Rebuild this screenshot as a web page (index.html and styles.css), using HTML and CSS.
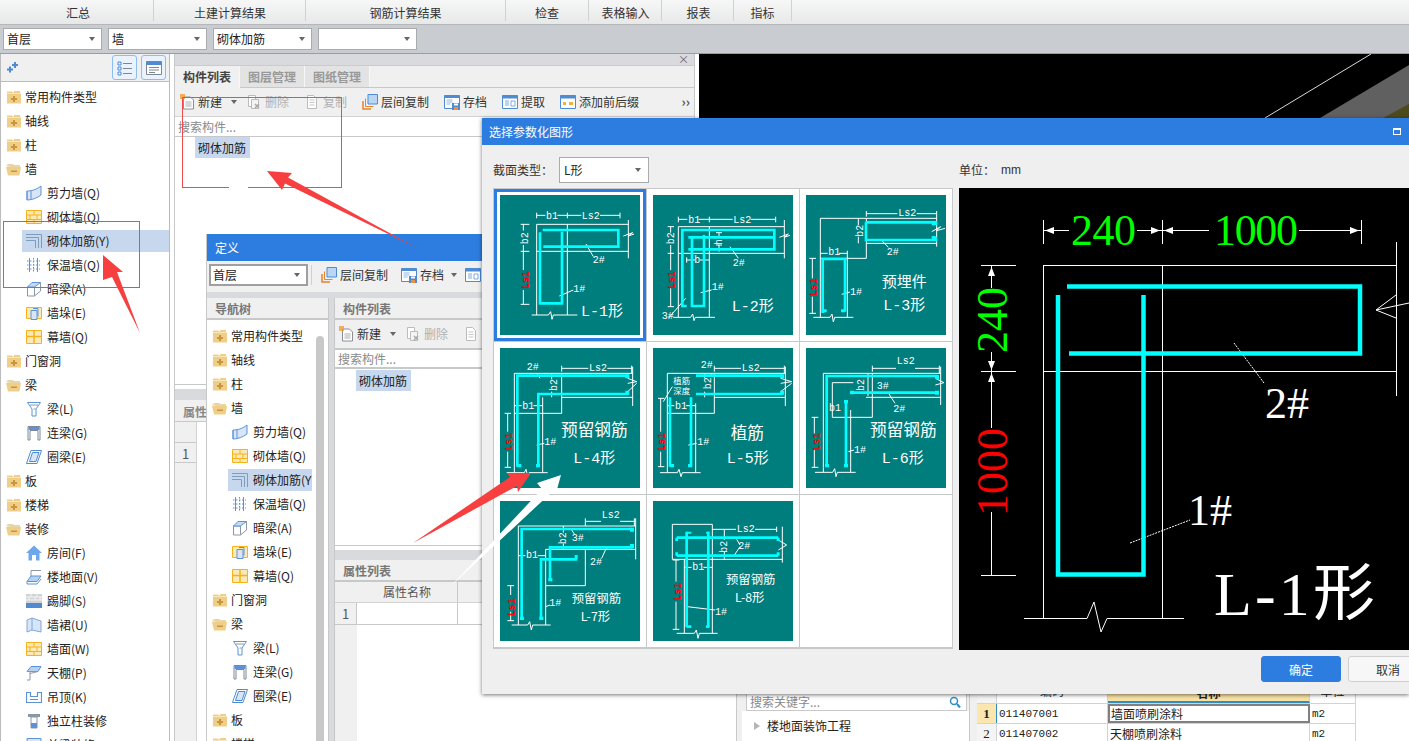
FILE: index.html
```html
<!DOCTYPE html>
<html lang="zh">
<head>
<meta charset="utf-8">
<title>选择参数化图形</title>
<link rel="stylesheet" href="styles.css">
</head>
<body>
<svg class="sprite" xmlns="http://www.w3.org/2000/svg">
  <symbol id="fp" viewBox="0 0 16 16"><path d="M1 2.500h5l1 1h1V2h6v2h1v10.500H1z" fill="#efcf87"/><path d="M1 4.500h14" stroke="#f8e6bb"/><path d="M7 7h2v2h2v2H9v2H7v-2H5V9h2z" fill="#c9963f"/></symbol>
  <symbol id="fm" viewBox="0 0 16 16"><path d="M2 3h5l1 1h6v2H4L0 5z" fill="#e9d6a8"/><path d="M0 6h15l-1.500 8.500H2z" fill="#efcf87"/><path d="M5 9.500h6v1.500H5z" fill="#c9963f"/></symbol>
  <symbol id="shear" viewBox="0 0 16 16"><path d="M1 6c4 0 9-1 14-5v9c-4 3-9 5-14 5z" fill="#d7e5f6" stroke="#5d93d6"/><path d="M1 6v9M5 5.500v9" stroke="#5d93d6" fill="none"/></symbol>
  <symbol id="brick" viewBox="0 0 16 16"><path d="M.5 1.500h15v13H.5z" fill="#fde9b5" stroke="#f6b21b"/><path d="M.5 6h15M.5 10.500h15M8 1.500V6M4 6v4.500M11 6v4.500M8 10.500v4" stroke="#f6b21b" fill="none"/></symbol>
  <symbol id="rebar" viewBox="0 0 16 16"><path d="M0 1.500h15.500V15M0 4.500h12.500V15M0 7.500h9.500V15" fill="none" stroke="#7c9cc0"/><path d="M0 3h14V15" fill="none" stroke="#c8d6e6"/></symbol>
  <symbol id="insul" viewBox="0 0 16 16"><path d="M3.500 1v14M11.500 1v14" stroke="#5d93d6" fill="none"/><path d="M7.500 1v14M1 4h13M1 8h13M1 12h13" stroke="#5d93d6" stroke-dasharray="1.500 1.500" fill="none"/></symbol>
  <symbol id="hidden" viewBox="0 0 16 16"><path d="M1.500 6v9h7V6z" fill="#fff" stroke="#8b97a5"/><path d="M1.500 6L6 1.500h8.500L8.500 6z" fill="#c6dbf3" stroke="#5d93d6"/><path d="M8.500 15l6-5V1.500" fill="#fff" stroke="#8b97a5"/></symbol>
  <symbol id="pier" viewBox="0 0 16 16"><path d="M.5 2.500h15v11H.5z" fill="#fde9b5" stroke="#f6b21b"/><path d="M5 5.500h6v9H5z" fill="#d7e5f6" stroke="#5d93d6"/><path d="M7 3.500h5v8" fill="none" stroke="#5d93d6"/></symbol>
  <symbol id="curtain" viewBox="0 0 16 16"><path d="M.5 1.500h15v13H.5z" fill="#fde9b5" stroke="#f6b21b"/><path d="M.5 7.500h15M8 1.500v13" stroke="#f6b21b" stroke-width="1.500"/></symbol>
  <symbol id="beam" viewBox="0 0 16 16"><path d="M1.500 1.500h13L10 8v7H6V8z" fill="#fff" stroke="#5d93d6"/><path d="M4 4h8M7.500 8h2" stroke="#8b97a5"/></symbol>
  <symbol id="link" viewBox="0 0 16 16"><path d="M2 1.500h12V15h-2V5.500H4V15H2z" fill="#fff" stroke="#7e8894"/><path d="M2.500 2h11v3h-11z" fill="#5d93d6"/></symbol>
  <symbol id="ring" viewBox="0 0 16 16"><path d="M5 1.500h10.500L11 14.500H.5z" fill="#fff" stroke="#4f8bd3"/><path d="M6.500 3.500h6.500l-3 9H3.500z" fill="#d7e5f6" stroke="#4f8bd3"/></symbol>
  <symbol id="room" viewBox="0 0 16 16"><path d="M8 .5L16 8h-2.500v7.500H10V10H6v5.500H2.500V8H0z" fill="#6ea8ea"/></symbol>
  <symbol id="floor" viewBox="0 0 16 16"><path d="M5 7V1.500h10" fill="none" stroke="#8b97a5"/><path d="M5 7h10l-4 5.500H1z" fill="#b6d2f2" stroke="#5d93d6"/><path d="M1 12.500v2.500h10l4-5" fill="none" stroke="#5d93d6"/></symbol>
  <symbol id="skirt" viewBox="0 0 16 16"><path d="M0 1h16v9H0z" fill="#d2d3d5"/><path d="M0 4h16M0 7h16M5 1v3M11 1v3M3 4v3M9 4v3M14 4v3" stroke="#f4f4f4"/><path d="M0 10h16v5H0z" fill="#4f8bd3"/></symbol>
  <symbol id="dado" viewBox="0 0 16 16"><path d="M1 3l5 -2 9 3v11l-9-2-5 2z" fill="#d7e5f6" stroke="#7da9e0"/><path d="M6 1v12" stroke="#7da9e0"/></symbol>
  <symbol id="ceiling" viewBox="0 0 16 16"><path d="M5 1.500h10l-3 5H1z" fill="#b6d2f2" stroke="#5d93d6"/><path d="M1 6.500h11M4 6.500V15L1 15M12 6.500l-8 2" fill="none" stroke="#8b97a5"/></symbol>
  <symbol id="susp" viewBox="0 0 16 16"><path d="M.5 3.500h4v4h7v-4h4v10H.5z" fill="#fff" stroke="#5d93d6" stroke-width="1.200"/><path d="M4 10.500h8" stroke="#5d93d6"/></symbol>
  <symbol id="colfin" viewBox="0 0 16 16"><path d="M2 1h12v3H2z" fill="#8b97a5"/><path d="M5 4h6v11H5z" fill="#fff" stroke="#8b97a5"/><path d="M5 10h6v5H5z" fill="#5d93d6"/></symbol>
  <symbol id="beamfin" viewBox="0 0 16 16"><path d="M1 1.500h14v5H1z" fill="#d7e5f6" stroke="#5d93d6"/><path d="M4 6.500v8h8v-8" fill="#fff" stroke="#8b97a5"/></symbol>
  <symbol id="new" viewBox="0 0 16 16"><path d="M3.500 3h7l3 3v9h-10z" fill="#fff" stroke="#8b8f95"/><path d="M5.500 8h6M5.500 10h6M5.500 12h6" stroke="#a9adb2"/><path d="M0 0h5v5H0z" fill="#f29a2e" opacity=".75"/></symbol>
  <symbol id="del" viewBox="0 0 16 16"><path d="M2.500 1.500h7v11h-7z" fill="#fff" stroke="#bcbcbc"/><path d="M5.500 5.500h7v9h-7z" fill="#f4f4f4" stroke="#bcbcbc"/><path d="M9 10l4 4M13 10l-4 4" stroke="#a9a9a9" stroke-width="1.500"/></symbol>
  <symbol id="copy" viewBox="0 0 16 16"><path d="M3.500 1.500h6l3 3v10h-9z" fill="#fff" stroke="#bcbcbc"/><path d="M5.500 6h5M5.500 8.500h5M5.500 11h5" stroke="#c6c6c6"/></symbol>
  <symbol id="floorcopy" viewBox="0 0 16 16"><path d="M1 7v8h8" fill="none" stroke="#e8832c" stroke-width="1.500"/><path d="M3.500 4.500v8h8" fill="none" stroke="#e8832c"/><path d="M6 .5h9.500V10H6z" fill="#b9d6f5" stroke="#4f8bd3"/></symbol>
  <symbol id="save" viewBox="0 0 16 16"><path d="M.5 1.500h15v13H.5z" fill="#fff" stroke="#4f8bd3"/><path d="M.5 1.500h15v2.500H.5z" fill="#4f8bd3"/><path d="M2.500 6h6M2.500 8h6M2.500 10h4" stroke="#8fb6e6"/><path d="M8 9h8v7H8z" fill="#4f8bd3"/><path d="M10 9.500h4v2h-4z" fill="#fff"/><path d="M10 13h4v3h-4z" fill="#f0913a"/></symbol>
  <symbol id="extract" viewBox="0 0 16 16"><path d="M.5 1.500h15v13H.5z" fill="#fff" stroke="#4f8bd3"/><path d="M.5 1.500h15v3H.5z" fill="#4f8bd3"/><path d="M3 7h4M3 9h4M3 11h4M9 7h4v5H9z" fill="none" stroke="#7da9e0"/></symbol>
  <symbol id="prefix" viewBox="0 0 16 16"><path d="M.5 1.500h15v13H.5z" fill="#fff" stroke="#4f8bd3"/><path d="M.5 1.500h15v3H.5z" fill="#4f8bd3"/><path d="M3 8h3v3H3zM9 8h4v3H9z" fill="#f0b040"/></symbol>
  <symbol id="tree-list" viewBox="0 0 16 16"><path d="M1 2h3v3H1zM1 7h3v3H1zM1 12h3v3H1z" fill="none" stroke="#4f8bd3"/><path d="M6 3.500h9M6 8.500h9M6 13.500h9" stroke="#7c8793"/></symbol>
  <symbol id="grid-list" viewBox="0 0 16 16"><path d="M.5 1.500h15v13H.5z" fill="#fff" stroke="#7c8793"/><path d="M.5 1.500h15v3.500H.5z" fill="#4f8bd3"/><path d="M3 7.500h10M3 10h10M3 12.500h6" stroke="#7c8793"/></symbol>
  <symbol id="spark" viewBox="0 0 12 12"><path d="M7 0h2v2h2v2H9v2H7V4H5V2h2zM2 4.500h2v2h2v2H4v2H2v-2H0v-2h2z" fill="#4f8bd3"/></symbol>
  <symbol id="lens" viewBox="0 0 12 12"><circle cx="5" cy="5" r="3.500" fill="none" stroke="#2f8fc5" stroke-width="1.500"/><path d="M8 8l3 3.500" stroke="#2f8fc5" stroke-width="2"/></symbol>
</svg>

<div class="app">
  <nav class="menubar">
    <div class="menu m1">汇总</div>
    <div class="menu m2">土建计算结果</div>
    <div class="menu m3">钢筋计算结果</div>
    <div class="menu m4">检查</div>
    <div class="menu m5">表格输入</div>
    <div class="menu m6">报表</div>
    <div class="menu m7">指标</div>
  </nav>

  <div class="filterbar">
    <div class="sel w99"><span>首层</span><i class="caret"></i></div>
    <div class="sel w99"><span>墙</span><i class="caret"></i></div>
    <div class="sel w99"><span>砌体加筋</span><i class="caret"></i></div>
    <div class="sel w99"><span></span><i class="caret"></i></div>
  </div>

  <div class="workspace">
    <aside class="nav">
      <div class="nav-head">
        <svg class="spark"><use href="#spark"/></svg>
        <div class="nav-btns">
          <div class="navbtn"><svg class="ico"><use href="#tree-list"/></svg></div>
          <div class="navbtn"><svg class="ico"><use href="#grid-list"/></svg></div>
        </div>
      </div>
      <div class="tree">
        <div class="row l0"><svg class="ico"><use href="#fp"/></svg><span>常用构件类型</span></div>
        <div class="row l0"><svg class="ico"><use href="#fp"/></svg><span>轴线</span></div>
        <div class="row l0"><svg class="ico"><use href="#fp"/></svg><span>柱</span></div>
        <div class="row l0"><svg class="ico"><use href="#fm"/></svg><span>墙</span></div>
        <div class="row l1"><svg class="ico"><use href="#shear"/></svg><span>剪力墙(Q)</span></div>
        <div class="row l1"><svg class="ico"><use href="#brick"/></svg><span>砌体墙(Q)</span></div>
        <div class="row l1 on"><svg class="ico"><use href="#rebar"/></svg><span>砌体加筋(Y)</span></div>
        <div class="row l1"><svg class="ico"><use href="#insul"/></svg><span>保温墙(Q)</span></div>
        <div class="row l1"><svg class="ico"><use href="#hidden"/></svg><span>暗梁(A)</span></div>
        <div class="row l1"><svg class="ico"><use href="#pier"/></svg><span>墙垛(E)</span></div>
        <div class="row l1"><svg class="ico"><use href="#curtain"/></svg><span>幕墙(Q)</span></div>
        <div class="row l0"><svg class="ico"><use href="#fp"/></svg><span>门窗洞</span></div>
        <div class="row l0"><svg class="ico"><use href="#fm"/></svg><span>梁</span></div>
        <div class="row l1"><svg class="ico"><use href="#beam"/></svg><span>梁(L)</span></div>
        <div class="row l1"><svg class="ico"><use href="#link"/></svg><span>连梁(G)</span></div>
        <div class="row l1"><svg class="ico"><use href="#ring"/></svg><span>圈梁(E)</span></div>
        <div class="row l0"><svg class="ico"><use href="#fp"/></svg><span>板</span></div>
        <div class="row l0"><svg class="ico"><use href="#fp"/></svg><span>楼梯</span></div>
        <div class="row l0"><svg class="ico"><use href="#fm"/></svg><span>装修</span></div>
        <div class="row l1"><svg class="ico"><use href="#room"/></svg><span>房间(F)</span></div>
        <div class="row l1"><svg class="ico"><use href="#floor"/></svg><span>楼地面(V)</span></div>
        <div class="row l1"><svg class="ico"><use href="#skirt"/></svg><span>踢脚(S)</span></div>
        <div class="row l1"><svg class="ico"><use href="#dado"/></svg><span>墙裙(U)</span></div>
        <div class="row l1"><svg class="ico"><use href="#brick"/></svg><span>墙面(W)</span></div>
        <div class="row l1"><svg class="ico"><use href="#ceiling"/></svg><span>天棚(P)</span></div>
        <div class="row l1"><svg class="ico"><use href="#susp"/></svg><span>吊顶(K)</span></div>
        <div class="row l1"><svg class="ico"><use href="#colfin"/></svg><span>独立柱装修</span></div>
        <div class="row l1"><svg class="ico"><use href="#beamfin"/></svg><span>单梁装修</span></div>
      </div>
    </aside>

    <section class="center">
      <div class="band"><span class="close">×</span></div>
      <div class="tabs">
        <div class="tab active">构件列表</div>
        <div class="tab">图层管理</div>
        <div class="tab">图纸管理</div>
      </div>
      <div class="tools">
        <div class="tool tool-new"><svg class="ico"><use href="#new"/></svg><span>新建</span><i class="caret caret-new"></i></div>
        <div class="tool off"><svg class="ico"><use href="#del"/></svg><span>删除</span></div>
        <div class="tool off"><svg class="ico"><use href="#copy"/></svg><span>复制</span></div>
        <div class="tool"><svg class="ico"><use href="#floorcopy"/></svg><span>层间复制</span></div>
        <div class="tool"><svg class="ico"><use href="#save"/></svg><span>存档</span></div>
        <div class="tool"><svg class="ico"><use href="#extract"/></svg><span>提取</span></div>
        <div class="tool"><svg class="ico"><use href="#prefix"/></svg><span>添加前后缀</span></div>
        <span class="more">››</span>
      </div>
      <div class="search">搜索构件...</div>
      <div class="list"><span class="chip">砌体加筋</span></div>
      <div class="band band-prop"></div>
      <div class="prop-head">属性列表</div>
      <div class="prop-body">
        <div class="gutter"><div class="gutter-top"></div><div class="gutter-num">1</div></div>
        <div class="prop-cols"></div>
      </div>
    </section>

    <main class="canvas">
      <svg class="scene" viewBox="0 0 710 64" width="710" height="64">
        <path d="M710 11L621 64H710z" fill="#606060"/>
        <path d="M710 50L684 64H710z" fill="#4d4a1c"/>
        <path d="M672 0L566 64" stroke="#d8d8d8" fill="none"/>
      </svg>
    </main>
  </div>

  <!-- lower library window, behind the dialog -->
  <section class="win win-lib">
    <div class="lib-tree">
      <div class="lib-search"><span>搜索关键字...</span><svg class="lens"><use href="#lens"/></svg></div>
      <div class="lib-item"><i class="tri"></i><span>楼地面装饰工程</span></div>
    </div>
    <div class="lib-split"></div>
    <div class="lib-table">
      <div class="lib-row head"><div class="c0"></div><div class="c1">编码</div><div class="c2 hl">名称</div><div class="c3">单位</div></div>
      <div class="lib-row"><div class="c0 hl-num">1</div><div class="c1">011407001</div><div class="c2 edit">墙面喷刷涂料</div><div class="c3">m2</div></div>
      <div class="lib-row"><div class="c0">2</div><div class="c1">011407002</div><div class="c2">天棚喷刷涂料</div><div class="c3">m2</div></div>
    </div>
  </section>

  <!-- 定义 window -->
  <section class="win win-def">
    <header class="titlebar">定义</header>
    <div class="def-tools">
      <div class="sel def-sel"><span>首层</span><i class="caret"></i></div>
      <div class="vsep"></div>
      <div class="tool"><svg class="ico"><use href="#floorcopy"/></svg><span>层间复制</span></div>
      <div class="tool"><svg class="ico"><use href="#save"/></svg><span>存档</span><i class="caret caret-save"></i></div>
      <div class="tool"><svg class="ico"><use href="#extract"/></svg></div>
    </div>
    <div class="def-main">
      <div class="def-left">
        <div class="pane-head">导航树</div>
        <div class="def-leftbody">
          <div class="tree def-tree">
            <div class="row l0"><svg class="ico"><use href="#fp"/></svg><span>常用构件类型</span></div>
            <div class="row l0"><svg class="ico"><use href="#fp"/></svg><span>轴线</span></div>
            <div class="row l0"><svg class="ico"><use href="#fp"/></svg><span>柱</span></div>
            <div class="row l0"><svg class="ico"><use href="#fm"/></svg><span>墙</span></div>
            <div class="row l1"><svg class="ico"><use href="#shear"/></svg><span>剪力墙(Q)</span></div>
            <div class="row l1"><svg class="ico"><use href="#brick"/></svg><span>砌体墙(Q)</span></div>
            <div class="row l1 on"><svg class="ico"><use href="#rebar"/></svg><span>砌体加筋(Y)</span></div>
            <div class="row l1"><svg class="ico"><use href="#insul"/></svg><span>保温墙(Q)</span></div>
            <div class="row l1"><svg class="ico"><use href="#hidden"/></svg><span>暗梁(A)</span></div>
            <div class="row l1"><svg class="ico"><use href="#pier"/></svg><span>墙垛(E)</span></div>
            <div class="row l1"><svg class="ico"><use href="#curtain"/></svg><span>幕墙(Q)</span></div>
            <div class="row l0"><svg class="ico"><use href="#fp"/></svg><span>门窗洞</span></div>
            <div class="row l0"><svg class="ico"><use href="#fm"/></svg><span>梁</span></div>
            <div class="row l1"><svg class="ico"><use href="#beam"/></svg><span>梁(L)</span></div>
            <div class="row l1"><svg class="ico"><use href="#link"/></svg><span>连梁(G)</span></div>
            <div class="row l1"><svg class="ico"><use href="#ring"/></svg><span>圈梁(E)</span></div>
            <div class="row l0"><svg class="ico"><use href="#fp"/></svg><span>板</span></div>
            <div class="row l0"><svg class="ico"><use href="#fp"/></svg><span>楼梯</span></div>
          </div>
          <div class="vscroll"></div>
        </div>
      </div>
      <div class="def-right">
        <div class="pane-head">构件列表</div>
        <div class="tools def-subtools">
          <div class="tool tool-new"><svg class="ico"><use href="#new"/></svg><span>新建</span><i class="caret caret-new"></i></div>
          <div class="tool off"><svg class="ico"><use href="#del"/></svg><span>删除</span></div>
          <div class="tool off"><svg class="ico"><use href="#copy"/></svg></div>
        </div>
        <div class="search def-search">搜索构件...</div>
        <div class="list def-list"><span class="chip">砌体加筋</span></div>
        <div class="band band-def"></div>
        <div class="pane-head pane-prop">属性列表</div>
        <div class="def-prop">
          <div class="lib-row head prop-row"><div class="pc0"></div><div class="pc1">属性名称</div><div class="pc2"></div></div>
          <div class="lib-row prop-row2"><div class="pc0 num">1</div><div class="pc1"></div><div class="pc2"></div></div>
          <div class="prop-fill"><div class="pc0"></div></div>
        </div>
      </div>
    </div>
  </section>

  <!-- dialog -->
  <section class="win dlg">
    <header class="titlebar dlg-title"><span>选择参数化图形</span><i class="maxbox"></i></header>
    <div class="dlg-body">
      <div class="dlg-left">
        <div class="type-row">
          <label>截面类型：</label>
          <div class="sel type-sel"><span>L形</span><i class="caret"></i></div>
        </div>
        <div class="thumbs">
          <div class="cell picked">
            <svg class="thumb" viewBox="60 255 420 420">
              <path class="w" d="M170 316H196M232 316H304M360 316H420M170 308V325M262 308V325M420 308V325M170 343H445M170 424H445M170 343V615M262 343V615M155 615H205L212 605L216 628L220 615H292M445 330V445M430 378L458 368L445 378L462 372M122 343H148M122 424H148M122 583H148M130 343V362M130 405V480M130 540V583M318 402L340 440M238 558L280 540"/>
              <path class="cy" d="M188 360H415V410H190M180 367V580H246V365"/>
              <text class="t" x="198" y="326">b1</text><text class="t" x="305" y="326">Ls2</text>
              <text class="t m" transform="rotate(-90 145 385)" x="145" y="385">b2</text>
              <text class="t red m" transform="rotate(-90 146 510)" x="146" y="510">Ls1</text>
              <text class="t" x="338" y="460">2#</text><text class="t" x="280" y="545">1#</text>
              <text class="lab" x="303" y="618">L-1形</text>
            </svg>
          </div>
          <div class="cell">
            <svg class="thumb" viewBox="519 255 420 420">
              <path class="w" d="M595 328H622M656 328H758M812 328H887M595 320V337M688 320V337M887 320V337M595 350H913M595 430H913M595 350V622M688 350V622M580 622H632L638 612L642 632L646 622H705M913 330V445M898 382L925 372L913 382L930 376M563 350H582M563 430H582M563 590H582M572 350V368M572 405V480M572 535V590M620 450H645M660 450H688M620 442V458M717 368V382M717 405V425M708 368H726M708 405H726M750 410L775 445M662 548L695 540M617 565L565 625"/>
              <path class="cy" d="M620 588H607V360H883V418H625M625 382H883M636 378V588H672V375"/>
              <text class="t" x="625" y="338">b1</text><text class="t" x="760" y="338">Ls2</text><text class="t" x="643" y="460">b</text><text class="t m" transform="rotate(-90 725 396)" x="725" y="396">h</text>
              <text class="t m" transform="rotate(-90 583 385)" x="583" y="385">b2</text>
              <text class="t red m" transform="rotate(-90 584 510)" x="584" y="510">Ls1</text>
              <text class="t" x="758" y="468">2#</text><text class="t" x="695" y="540">1#</text><text class="t" x="545" y="626">3#</text>
              <text class="lab" x="755" y="603">L-2形</text>
            </svg>
          </div>
          <div class="cell">
            <svg class="thumb" viewBox="48 255 420 420">
              <path class="w" d="M229 311H322M380 311H440M229 303V320M440 303V410M229 325H91V622M229 325V445H91M229 400H440M229 325H440M172 422V622M91 430H113M147 430H172M70 622H120L126 612L130 636L134 622H190M425 365L452 350L440 362L465 355M58 445H78M58 610H78M67 445V505M67 560V610M205 325V345M205 380V400M272 388L295 412M155 553L180 546"/>
              <path class="cy" d="M227 337H437V345M437 380V390H228V337M103 605H98V447H165V605"/>
              <path class="d" d="M98 598h12v9h-12zM153 598h12v9h-12zM425 334h12v12h-12zM425 378h12v12h-12z"/>
              <text class="t" x="325" y="318">Ls2</text><text class="t" x="115" y="434">b1</text>
              <text class="t m" transform="rotate(-90 218 362)" x="218" y="362">b2</text>
              <text class="t red m" transform="rotate(-90 81 532)" x="81" y="532">Ls1</text>
              <text class="t" x="290" y="436">2#</text><text class="t" x="180" y="556">1#</text>
              <text class="lab" x="275" y="532">预埋件</text><text class="lab" x="280" y="600">L-3形</text>
            </svg>
          </div>
          <div class="cell">
            <svg class="thumb" viewBox="60 24 420 420">
              <path class="w" d="M245 85H325M382 85H455M245 77V95M455 77V100M103 100V398M103 100H458M245 100V220M103 220H245M188 172V398M80 398H133L138 388L143 408L147 398H203M245 172H458M458 80V198M74 220H93M74 382H93M83 220V275M83 335V382M215 100V118M215 155V172M103 197H125M160 197H188M170 100L180 115M170 315L193 310M443 130L470 125L443 115M443 155L470 130"/>
              <path class="cy" d="M112 380V107H445M175 380V162H445"/>
              <path class="d" d="M112 372h12v10h-12zM168 372h12v10h-12zM436 103h12v12h-12zM436 152h12v12h-12z"/>
              <text class="t" x="327" y="92">Ls2</text><text class="t" x="140" y="90">2#</text><text class="t" x="127" y="206">b1</text><text class="t" x="193" y="316">1#</text>
              <text class="t m" transform="rotate(-90 231 135)" x="231" y="135">b2</text>
              <text class="t red m" transform="rotate(-90 96 305)" x="96" y="305">Ls1</text>
              <text class="lab big" x="243" y="287">预留钢筋</text><text class="lab" x="280" y="368">L-4形</text>
            </svg>
          </div>
          <div class="cell">
            <svg class="thumb" viewBox="519 24 420 420">
              <path class="w" d="M703 85H783M840 85H913M703 77V95M913 77V100M562 100V398M562 100H916M703 100V220M562 220H703M647 190V398M540 398H592L597 388L603 410L607 398H662M703 172H916M916 80V198M534 175H553M534 380H553M542 175V275M542 335V380M674 100V115M674 155V172M562 197H583M618 197H647M695 100L690 110M577 140L550 185M625 315L650 310M902 130L935 125L902 115M902 155L935 130"/>
              <path class="cy" d="M570 380V172M633 380V172M648 107H908M648 162H908"/>
              <path class="d" d="M570 372h12v10h-12zM624 372h12v10h-12zM900 103h12v12h-12zM900 152h12v12h-12z"/>
              <text class="t" x="785" y="92">Ls2</text><text class="t" x="662" y="85">2#</text><text class="t" x="585" y="206">b1</text><text class="t" x="652" y="316">1#</text>
              <text class="lab small" x="580" y="132">植筋</text><text class="lab small" x="580" y="162">深度</text>
              <text class="t m" transform="rotate(-90 692 130)" x="692" y="130">b2</text>
              <text class="t red m" transform="rotate(-90 556 305)" x="556" y="305">Ls1</text>
              <text class="lab big" x="752" y="297">植筋</text><text class="lab" x="740" y="370">L-5形</text>
            </svg>
          </div>
          <div class="cell">
            <svg class="thumb" viewBox="48 714 420 420">
              <path class="w" d="M247 775H318M375 775H448M247 767V785M448 767V790M100 790V1072M100 790H452M247 790V922M127 922H247M127 818V922M127 818H190M182 900V1072M228 862H452M452 770V885M75 1087H128L134 1076L138 1100L142 1087H197M100 1072V1087M182 1072V1087M65 922H85M65 1072H85M73 922V970M73 1020V1072M234 790V858M297 852L315 880M175 1025L192 1020M436 825L462 818L436 805"/>
              <path class="cy" d="M110 1068V798H443M168 870V1068M180 848H443"/>
              <path class="d" d="M105 1062h12v10h-12zM162 1062h12v10h-12zM435 795h12v12h-12zM435 842h12v12h-12zM162 870h12v10h-12zM180 842h12v11h-12z"/>
              <text class="t" x="320" y="763">Ls2</text><text class="t" x="260" y="836">3#</text><text class="t" x="310" y="907">2#</text><text class="t" x="117" y="902">b1</text><text class="t" x="192" y="1030">1#</text>
              <text class="t m" transform="rotate(-90 222 825)" x="222" y="825">b2</text>
              <text class="t red m" transform="rotate(-90 90 995)" x="90" y="995">Ls1</text>
              <text class="lab big" x="240" y="977">预留钢筋</text><text class="lab" x="275" y="1060">L-6形</text>
            </svg>
          </div>
          <div class="cell">
            <svg class="thumb" viewBox="60 33 420 420">
              <path class="w" d="M316 94H363M420 94H463M316 85V108M463 85V108M115 108V405M115 108H467M197 178V405M197 178H467M467 85V208M316 180V287M197 287H316M95 405H143L149 395L154 420L158 405H212M82 287H102M82 392H102M92 287V315M92 365V392M250 108V128M250 160V178M115 197H136M173 197H197M275 120L285 135M380 172L365 205M197 350L210 345"/>
              <path class="cy" d="M125 388V117H458M210 272V172H458M183 388V208H292"/>
              <path class="d" d="M120 380h12v10h-12zM178 380h12v10h-12zM205 264h12v10h-12zM450 113h12v12h-12zM450 162h12v12h-12zM284 195h9v12h-9z"/>
              <text class="t" x="365" y="85">Ls2</text><text class="t" x="275" y="154">3#</text><text class="t" x="330" y="226">2#</text><text class="t" x="138" y="204">b1</text><text class="t" x="208" y="349">1#</text>
              <text class="t m" transform="rotate(-90 259 145)" x="259" y="145">b2</text>
              <text class="t red m" transform="rotate(-90 105 352)" x="105" y="352">Ls1</text>
              <text class="lab mid" x="275" y="339">预留钢筋</text><text class="lab mid" x="302" y="394">L-7形</text>
            </svg>
          </div>
          <div class="cell">
            <svg class="thumb" viewBox="519 33 420 420">
              <path class="w" d="M577 103H697V208H577zM697 118H768M825 118H890M890 110V126M697 208H907M907 110V218M613 208V430M697 208V430M590 430H643L649 420L654 445L658 430H713M578 210H598M578 418H598M588 210V275M588 335V418M613 232H635M670 232H697M733 118V150M733 185V208M770 148L780 165M780 170L762 197M622 350L705 360M895 150L920 165L895 180"/>
              <path class="cy" d="M590 143H895M590 197H895M620 125V412M685 125V412"/>
              <path class="d" d="M586 143h8v10h-8zM586 187h8v10h-8zM890 143h9v10h-9zM890 187h9v10h-9zM620 125h14v6h-14zM678 125h10v6h-10zM620 406h14v8h-14zM678 406h10v8h-10z"/>
              <text class="t" x="770" y="125">Ls2</text><text class="t" x="775" y="178">2#</text><text class="t" x="637" y="241">b1</text><text class="t" x="705" y="375">1#</text>
              <text class="t m" transform="rotate(-90 742 170)" x="742" y="170">b2</text>
              <text class="t red m" transform="rotate(-90 603 305)" x="603" y="305">Ls1</text>
              <text class="lab mid" x="738" y="281">预留钢筋</text><text class="lab mid" x="765" y="336">L-8形</text>
            </svg>
          </div>
          <div class="cell"></div>
        </div>
      </div>
      <div class="dlg-right">
        <div class="unit"><span>单位：</span><span class="mm">mm</span></div>
        <svg class="preview" viewBox="959 188 450 462" width="450" height="462">
          <path class="pw" d="M1043.500 220V244M1162.500 220V244M1361.500 220V244M1044 230.500H1069M1137 230.500H1209M1299 230.500H1361M1043.500 265.500H1396M1043.500 371.500H1396M1043.500 265V618M1162.500 265V618M1024 618.500H1087L1094 602L1101 632L1107 618.500H1184M1396.500 242V396M981 265.500H1016M981 371.500H1016M981 575.500H1016M991.500 265V288M991.500 352V428M991.500 512V575M1396 295L1376 310L1396 318M1376 310L1409 303"/>
          <path class="pthin" d="M1234 343L1264 383M1130 543L1190 520"/>
          <path class="arrow" d="M1045 230.500L1054 227V234zM1160 230.500L1151 227V234zM1164 230.500L1173 227V234zM1359 230.500L1350 227V234zM991.500 267L988 276H995zM991.500 370L988 361H995zM991.500 373L988 382H995z"/>
          <path class="pcy" d="M1067 286.500H1360V353.500H1069M1058 295V574.500H1143.500V295"/>
          <text class="dim green" x="1071" y="245" textLength="65">240</text>
          <text class="dim green" x="1214" y="245" textLength="84">1000</text>
          <text class="dim green" transform="rotate(-90 1007 320)" x="1007" y="320" text-anchor="middle">240</text>
          <text class="dim redd" transform="rotate(-90 1007 472)" x="1007" y="472" text-anchor="middle">1000</text>
          <text class="dim whitee" x="1265" y="418">2#</text>
          <text class="dim whitee" x="1188" y="525">1#</text>
          <text class="bigl" x="1214" y="615" textLength="161">L-1形</text>
        </svg>
      </div>
    </div>
    <footer class="dlg-foot">
      <button class="btn primary">确定</button>
      <button class="btn">取消</button>
    </footer>
  </section>

  <!-- annotations layered over the screenshot -->
  <div class="mark mark-a"></div>
  <div class="mark mark-a-gap"></div>
  <div class="mark mark-b"></div>
  <svg class="arrows" viewBox="0 0 1409 741" width="1409" height="741">
    <path class="ra" d="M267 171L292 173L288 177.500L417 248L285 183.500L282 190z"/>
    <path class="ra" d="M103 255L123 272L117 272L140 333L112 277L103 280z"/>
    <path class="ra" d="M531 473L507 473L510 477L413 543L517 486L518 492z"/>
    <path class="wa" d="M561 475L537 483L542 489L451 586L553 491L556 493z"/>
  </svg>
</div>
</body>
</html>
```
FILE: styles.css
```css
* { box-sizing: border-box; }
html, body { margin: 0; padding: 0; height: 100%; }
body {
  width: 1409px; height: 741px; overflow: hidden; background: #fff;
  font: 12px/16px "Noto Sans CJK SC", "Liberation Sans", sans-serif; color: #222;
}
.sprite { display: none; }
.app { position: relative; width: 1409px; height: 741px; overflow: hidden; display: flex; flex-direction: column; }

/* menu */
.menubar { display: flex; height: 25px; flex: none; background: linear-gradient(#f7f7f7, #e7e8e8); border-bottom: 1px solid #b5b7ba; }
.menu { text-align: center; line-height: 26px; color: #333; border-right: 1px solid #cfd1d3; height: 21px; }
.m1 { width: 154px; padding-left: 3px; } .m2 { width: 152px; padding-left: 1px; } .m3 { width: 200px; } .m4 { width: 83px; }
.m5 { width: 73px; padding-left: 1px; } .m6 { width: 72px; padding-left: 2px; } .m7 { width: 58px; }

/* filter row */
.filterbar { display: flex; gap: 6px; height: 29px; flex: none; padding: 3px 0 0 3px; background: #c9ccd1; border-bottom: 1px solid #9b9da0; }
.sel { display: flex; align-items: center; justify-content: space-between; height: 22px; padding: 0 6px 0 3px; background: #fff; border: 1px solid #a9abad; font-size: 12px; }
.w99 { width: 99px; }
.caret { display: inline-block; width: 0; height: 0; border: 3.5px solid transparent; border-top: 4px solid #666; border-bottom: 0; }

.workspace { flex: 1; display: flex; min-height: 0; background: #fff; }

/* left nav */
.nav { width: 170px; flex: none; border-left: 1px solid #b9bbbd; border-right: 1px solid #b9bbbd; overflow: hidden; }
.nav-head { height: 28px; background: #f0f0f0; border-bottom: 1px solid #b9bbbd; display: flex; justify-content: space-between; padding: 1px 3px 0 6px; }
.spark { width: 12px; height: 12px; margin-top: 7px; }
.nav-btns { display: flex; gap: 4px; }
.navbtn { width: 25px; height: 25px; background: #eaf3fd; border: 1px solid #8dbcf0; border-radius: 3px; display: flex; align-items: center; justify-content: center; }
.ico { width: 16px; height: 16px; flex: none; display: block; }
.tree { padding-top: 3px; }
.row { display: flex; align-items: center; height: 24px; white-space: nowrap; color: #222; }
.l0 { padding-left: 5px; gap: 3px; }
.l1 { padding-left: 25px; gap: 5px; }
.on { margin-left: 21px; padding-left: 4px; background: #c7d8ee; background-clip: padding-box; border-top: 1px solid transparent; border-bottom: 1px solid transparent; }

/* centre panel */
.center { width: 521px; margin: 0 4px; flex: none; display: flex; flex-direction: column; border-left: 1px solid #c6c8ca; border-right: 1px solid #c6c8ca; background: #fff; }
.band { height: 11px; flex: none; background: #d8dadd; position: relative; }
.close { position: absolute; right: 5px; top: -3px; font-size: 11px; color: #666; }
.tabs { display: flex; height: 23px; flex: none; background: #f0f0f0; border-bottom: 1px solid #c6c8ca; border-top: 1px solid #c9cbcd; }
.tab { width: 65px; text-align: center; line-height: 21px; font-weight: 700; color: #999; background: #e3e3e3; border-right: 1px solid #f7f7f7; }
.tab.active { color: #444; background: #f0f0f0; height: 22px; }
.tools { display: flex; align-items: center; gap: 15px; height: 29px; flex: none; padding-left: 5px; background: #f0f0f0; border-bottom: 1px solid #d3d3d3; }
.tool { display: flex; align-items: center; gap: 3px; white-space: nowrap; color: #333; }
.tool.off { color: #b0b0b0; }
.tool-new { margin-right: -6px; gap: 2px; }
.caret-new { margin-left: 7px; }
.more { margin-left: auto; margin-right: 4px; color: #555; font-size: 13px; font-weight: 700; }
.search { height: 20px; flex: none; line-height: 19px; padding-left: 3px; color: #8a8a8a; background: #fff; border-bottom: 1px solid #c6c8ca; }
.list { height: 248px; flex: none; padding: 0 0 0 20px; background: #fff; border-bottom: 1px solid #c6c8ca; }
.chip { display: inline-block; height: 21px; line-height: 21px; padding: 0 4px 0 3px; background: #c7d8ee; color: #222; margin-top: 0; }
.band-prop { margin-top: 4px; }
.prop-head { height: 22px; flex: none; line-height: 23px; padding-left: 8px; color: #888; font-weight: 700; background: #f0f0f0; border-bottom: 1px solid #c6c8ca; }
.prop-body { flex: 1; display: flex; }
.gutter { width: 22px; background: #f0f0f0; border-right: 1px solid #d3d3d3; }
.gutter-top { height: 20px; }
.gutter-num { height: 21px; line-height: 21px; text-align: center; font-size: 13px; color: #555; border-top: 1px solid #c6c8ca; border-bottom: 1px solid #c6c8ca; }
.prop-cols { flex: 1; }

/* canvas */
.canvas { flex: 1; background: #000; position: relative; }
.scene { display: block; }

/* generic windows on the desktop */
.win { position: absolute; }
.titlebar { background: #2d7de0; color: #fff; height: 27px; line-height: 27px; padding-left: 8px; flex: none; }

/* lower library window */
.win-lib { left: 482px; top: 683px; width: 927px; height: 58px; background: #fff; display: flex; padding-left: 254px; }
.lib-tree { width: 234px; padding: 11px 0 0 0; background: #f0f0f0; border-left: 1px solid #c9c9c9; border-right: 1px solid #c9c9c9; }
.lib-search { margin: 0 2px 0 9px; height: 17px; background: #fff; border: 1px solid #c9c9c9; border-top: 0; display: flex; justify-content: space-between; align-items: center; padding: 0 5px 0 3px; color: #8a8a8a; }
.lens { width: 12px; height: 12px; }
.lib-item { display: flex; align-items: center; gap: 7px; height: 30px; margin-left: 5px; padding: 0 0 0 12px; background: #fff; color: #222; }
.tri { width: 0; height: 0; border: 4px solid transparent; border-left: 6px solid #b5b5b5; border-right: 0; }
.lib-split { width: 7px; background: #f0f0f0; }
.lib-table { flex: none; width: 379px; font-family: "Liberation Mono", "Noto Sans CJK SC", monospace; font-size: 11px; }
.lib-row { display: flex; height: 20px; line-height: 20px; border-bottom: 1px solid #d3d3d3; }
.lib-row.head { height: 21px; line-height: 20px; text-align: center; font-size: 12px; }
.c0 { width: 20px; text-align: center; background: #f4f4f4; border-right: 1px solid #d3d3d3; font-family: "Liberation Serif", serif; font-size: 13px; }
.c1 { width: 111px; padding-left: 2px; border-right: 1px solid #d3d3d3; }
.c2 { width: 202px; padding-left: 2px; border-right: 1px solid #d3d3d3; font-size: 12px; }
.c3 { width: 46px; padding-left: 2px; border-right: 1px solid #d3d3d3; }
.head .c1, .head .c2, .head .c3 { padding-left: 0; }
.hl { background: #f9e2a5; border-bottom: 2px solid #2f8fc5; font-family: "Noto Sans CJK SC", sans-serif; font-weight: 700; }
.hl-num { background: #fbe6b0; font-weight: 700; border-right: 1px solid #2f8fc5; }
.edit { border: 2px solid #808080; padding-left: 1px; line-height: 16px; font-family: "Noto Sans CJK SC", sans-serif; }
.lib-row .c2:not(.hl):not(.edit) { font-family: "Noto Sans CJK SC", sans-serif; }

/* 定义 window */
.win-def { left: 206px; top: 234px; width: 290px; height: 507px; background: #f0f0f0; display: flex; flex-direction: column; border-left: 1px solid #c6c8ca; }
.def-tools { display: flex; align-items: center; height: 31px; flex: none; padding: 0 0 4px 2px; }
.def-tools .tool { margin-right: 13px; }
.def-sel { width: 99px; border-color: #9f9f9f; border-width: 2px; padding-left: 2px; margin-right: 3px; }
.vsep { width: 1px; height: 20px; background: #d0d0d0; margin-right: 9px; }
.caret-save { margin: 0 -5px 0 4px; }
.def-main { flex: 1; display: flex; min-height: 0; background: #d8dadd; padding-top: 6px; }
.def-left { width: 122px; flex: none; background: #fff; display: flex; flex-direction: column; margin-right: 5px; border-right: 1px solid #c6c8ca; }
.pane-head { height: 22px; flex: none; line-height: 21px; padding-left: 8px; color: #777; font-weight: 700; background: #f0f0f0; border-bottom: 2px solid #c6c8ca; }
.def-leftbody { flex: 1; display: flex; min-height: 0; }
.def-tree { width: 105px; flex: none; overflow: hidden; padding-top: 4px; }
.vscroll { width: 8px; margin: 16px 0 0 4px; background: #c8c8c8; border-radius: 4px 4px 0 0; }
.def-right { flex: 1; display: flex; flex-direction: column; background: #fff; border-left: 1px solid #c6c8ca; min-width: 0; }
.def-subtools { height: 30px; padding-left: 4px; border-bottom: 2px solid #c6c8ca; }
.def-search { height: 19px; border-bottom: 2px solid #c6c8ca; line-height: 17px; }
.def-list { height: 177px; padding-left: 21px; }
.def-list .chip { margin-top: 1px; }
.band-def { margin-top: 4px; height: 10px; }
.pane-prop { height: 22px; }
.def-prop { flex: 1; display: flex; flex-direction: column; font-size: 12px; }
.prop-row { height: 19px; line-height: 19px; color: #555; background: #f0f0f0; font-size: 12px; font-family: "Noto Sans CJK SC", sans-serif; }
.prop-row2 { height: 22px; line-height: 22px; background: #fff; border-bottom: 1px solid #c6c8ca; }
.pc0 { width: 22px; background: #f0f0f0; }
.pc0.num { text-align: center; font-size: 13px; color: #555; border-right: 1px solid #c6c8ca; }
.pc1 { width: 101px; text-align: center; border-right: 1px solid #c6c8ca; }
.pc2 { flex: 1; }
.prop-fill { flex: 1; display: flex; }

/* dialog */
.dlg { left: 482px; top: 118px; width: 927px; height: 576px; background: #efefef; box-shadow: 0 1px 4px rgba(0,0,0,.55); display: flex; flex-direction: column; }
.dlg-title { display: flex; align-items: center; justify-content: space-between; padding: 0 8px 0 7px; }
.maxbox { width: 8px; height: 7px; border: 1px solid #fff; border-top-width: 2px; }
.dlg-body { flex: 1; display: flex; min-height: 0; padding-left: 11px; }
.dlg-left { width: 466px; flex: none; }
.type-row { display: flex; align-items: center; height: 43px; padding-top: 6px; gap: 11px; }
.type-row label { width: 55px; white-space: nowrap; color: #333; }
.type-sel { width: 90px; height: 26px; padding: 0 7px 0 4px; }
.thumbs { display: grid; grid-template-columns: repeat(3, 153px); grid-auto-rows: 153px; background: #fff; border: 1px solid #c6c8ca; border-width: 1px 1px 2px 1px; width: 460px; height: 461px; }
.cell { border-right: 1px solid #c6c8ca; border-bottom: 1px solid #c6c8ca; padding: 6px; background: #fff; display: flex; }
.cell.picked { box-shadow: inset 0 0 0 3px #2d7de0; }
.thumb { width: 140px; height: 140px; display: block; background: #007d7d; flex: none; }
.w { fill: none; stroke: #fff; stroke-width: 3; }
.cy { fill: none; stroke: #00ffff; stroke-width: 8; }
.d { fill: #00ffff; }
.t { font: 30px "Liberation Mono", monospace; fill: #fff; }
.t.m { text-anchor: middle; }
.t.red { fill: #ff0000; font-weight: 700; }
.lab { font: 45px "Liberation Mono", "Noto Sans CJK SC", monospace; fill: #fff; }
.lab.big { font: 50px "Noto Sans CJK SC", sans-serif; }
.lab.mid { font: 37px "Noto Sans CJK SC", sans-serif; }
.lab.small { font: 25px "Noto Sans CJK SC", sans-serif; }
.dlg-right { flex: 1; min-width: 0; display: flex; flex-direction: column; }
.unit { height: 43px; padding-top: 17px; display: flex; gap: 6px; color: #333; }
.mm { font-family: "Liberation Sans", sans-serif; }
.preview { display: block; background: #000; flex: none; }
.pw { fill: none; stroke: #fff; stroke-width: 1; }
.pthin { fill: none; stroke: #fff; stroke-width: 1; stroke-dasharray: 2 1; }
.pcy { fill: none; stroke: #00ffff; stroke-width: 4.5; }
.arrow { fill: #fff; }
.dim { font: 44px "Liberation Serif", serif; }
.green { fill: #00ff00; }
.redd { fill: #ff0000; }
.whitee { fill: #fff; }
.bigl { font: 62px "Liberation Serif", "Noto Sans CJK SC", serif; fill: #fff; }
.dlg-foot { flex: none; height: 44px; display: flex; align-items: flex-start; padding: 6px 0 0 779px; gap: 7px; }
.btn { width: 80px; height: 26px; flex: none; border-radius: 3px; border: 1px solid #d0d0d0; background: #f7f7f7; color: #333; font: 12px "Noto Sans CJK SC", sans-serif; padding: 0; }
.primary { background: #2d7de0; color: #fff; border-color: #2d7de0; }

/* annotations */
.mark { position: absolute; border: 1px solid #f04a4a; }
.mark-a { left: 182px; top: 97px; width: 160px; height: 91px; }
.mark-a-gap { left: 229px; top: 187px; width: 19px; height: 1px; border: 0; background: #fff; }
.mark-b { left: 3px; top: 221px; width: 137px; height: 67px; }
.arrows { position: absolute; left: 0; top: 0; pointer-events: none; }
.ra { fill: #f73f3f; }
.wa { fill: #fff; }
```
